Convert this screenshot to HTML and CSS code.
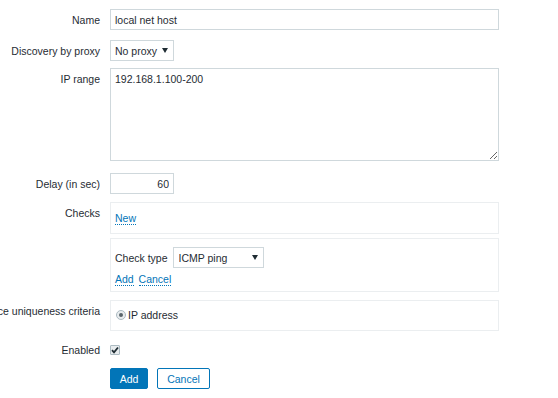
FILE: index.html
```html
<!DOCTYPE html>
<html lang="en">
<head>
    <meta charset="UTF-8">
    <meta name="viewport" content="width=device-width, initial-scale=1.0">
    <title>Discovery rule</title>
    <link rel="stylesheet" href="styles.css">
</head>
<body>
    <form class="form" action="#" method="post">
        <div class="row row-name">
            <label class="label">Name</label>
            <div class="field">
                <input type="text" class="input input-wide" value="local net host">
            </div>
        </div>

        <div class="row row-proxy">
            <label class="label">Discovery by proxy</label>
            <div class="field">
                <span class="select-wrap">
                    <select class="select select-proxy">
                        <option>No proxy</option>
                    </select>
                    <svg class="arrow" width="6" height="5" viewBox="0 0 6 5"><path d="M0 0 H6 L3 5 Z" fill="#1f2c33"/></svg>
                </span>
            </div>
        </div>

        <div class="row row-range">
            <label class="label">IP range</label>
            <div class="field">
                <textarea class="textarea">192.168.1.100-200</textarea>
            </div>
        </div>

        <div class="row row-delay">
            <label class="label">Delay (in sec)</label>
            <div class="field">
                <input type="text" class="input input-short" value="60">
            </div>
        </div>

        <div class="row row-checks">
            <label class="label">Checks</label>
            <div class="field">
                <div class="box box-checks">
                    <a href="#" class="link">New</a>
                </div>
                <div class="box box-type">
                    <div class="type-line">
                        <span>Check type</span>
                        <span class="select-wrap">
                            <select class="select select-type">
                                <option>ICMP ping</option>
                            </select>
                            <svg class="arrow" width="6" height="5" viewBox="0 0 6 5"><path d="M0 0 H6 L3 5 Z" fill="#1f2c33"/></svg>
                        </span>
                    </div>
                    <div class="type-links">
                        <a href="#" class="link">Add</a>
                        <a href="#" class="link">Cancel</a>
                    </div>
                </div>
            </div>
        </div>

        <div class="row row-uniq">
            <label class="label">Device uniqueness criteria</label>
            <div class="field">
                <div class="box box-uniq">
                    <span class="radio"><span class="radio-dot"></span></span>
                    <span>IP address</span>
                </div>
            </div>
        </div>

        <div class="row row-enabled">
            <label class="label">Enabled</label>
            <div class="field field-check">
                <span class="checkbox">
                    <svg width="8" height="8" viewBox="0 0 8 8">
                        <path d="M1 4.2 L3 6.3 L7 1.5" fill="none" stroke="#1f2c33" stroke-width="1.8"/>
                    </svg>
                </span>
            </div>
        </div>

        <div class="row row-buttons">
            <span></span>
            <div class="field buttons">
                <button type="submit" class="btn btn-main">Add</button>
                <button type="button" class="btn btn-alt">Cancel</button>
            </div>
        </div>
    </form>
</body>
</html>
```

FILE: styles.css
```css
body {
    font-family: "Liberation Sans", Arial, sans-serif;
    font-size: 10.5px;
    color: #1f2c33;
    margin: 0;
    padding: 0;
    background-color: #fff;
}

.form {
    padding-top: 9px;
    width: 499px;
}

.row {
    display: grid;
    grid-template-columns: 100px 389px;
    column-gap: 10px;
}

.label {
    display: flex;
    justify-content: flex-end;
    white-space: nowrap;
    padding-top: 4px;
    line-height: 14px;
}

.row-name { margin-bottom: 10px; }
.row-proxy { margin-bottom: 7px; }
.row-range { margin-bottom: 12px; }
.row-delay { margin-bottom: 8px; }
.row-checks { margin-bottom: 8px; }
.row-uniq { margin-bottom: 8px; }
.row-enabled { margin-bottom: 8px; }

.input, .select, .textarea {
    font-family: inherit;
    font-size: 10.5px;
    color: #1f2c33;
    border: 1px solid #cfd8dc;
    background-color: #fff;
    box-sizing: border-box;
    margin: 0;
    outline: none;
}

.input {
    height: 21px;
    padding: 0 4px;
}

.input-wide {
    width: 389px;
}

.input-short {
    width: 64px;
    text-align: right;
}

.textarea {
    display: block;
    width: 389px;
    height: 93px;
    padding: 3px 4px;
    line-height: 14px;
}

.select-wrap {
    position: relative;
    display: inline-block;
    height: 21px;
}

.select {
    appearance: none;
    -webkit-appearance: none;
    display: block;
    height: 21px;
    padding: 0 4px;
    border-radius: 0;
}

.select-proxy {
    width: 64px;
}

.select-type {
    width: 91px;
    padding-left: 5px;
}

.arrow {
    position: absolute;
    right: 6px;
    top: 8px;
    pointer-events: none;
}

.box {
    border: 1px solid #ebeef0;
    box-sizing: border-box;
    width: 389px;
}

.box-checks {
    padding: 8px 4px;
    line-height: 14px;
    margin-bottom: 4px;
}

.box-type {
    padding: 8px 4px 5px;
}

.type-line {
    display: flex;
    align-items: center;
    gap: 5px;
}

.type-links {
    margin-top: 4px;
    line-height: 14px;
}

.type-links .link {
    margin-right: 2px;
}

.link {
    color: #0275b8;
    text-decoration: none;
    border-bottom: 1px dotted #0275b8;
}

.box-uniq {
    display: flex;
    align-items: center;
    gap: 2px;
    padding: 7px 5px 8px;
    line-height: 14px;
}

.radio {
    width: 10px;
    height: 10px;
    box-sizing: border-box;
    border: 1px solid #acbbc2;
    border-radius: 50%;
    background-color: #e8ecee;
    display: flex;
    align-items: center;
    justify-content: center;
}

.radio-dot {
    width: 4px;
    height: 4px;
    border-radius: 50%;
    background-color: #59656b;
}

.field-check {
    height: 21px;
    display: flex;
    align-items: center;
}

.checkbox {
    width: 10px;
    height: 10px;
    box-sizing: border-box;
    border: 1px solid #acbbc2;
    border-radius: 1px;
    background-color: #e8ecee;
    display: flex;
    align-items: center;
    justify-content: center;
}

.buttons {
    display: flex;
    gap: 9px;
}

.btn {
    font-family: inherit;
    font-size: 10.5px;
    height: 21px;
    padding: 0 4px;
    border-radius: 2px;
    border: 1px solid #0275b8;
    box-sizing: border-box;
    cursor: pointer;
}

.btn-main {
    width: 38px;
    background-color: #0275b8;
    color: #fff;
}

.btn-alt {
    width: 53px;
    background-color: #fff;
    color: #0275b8;
}
```
